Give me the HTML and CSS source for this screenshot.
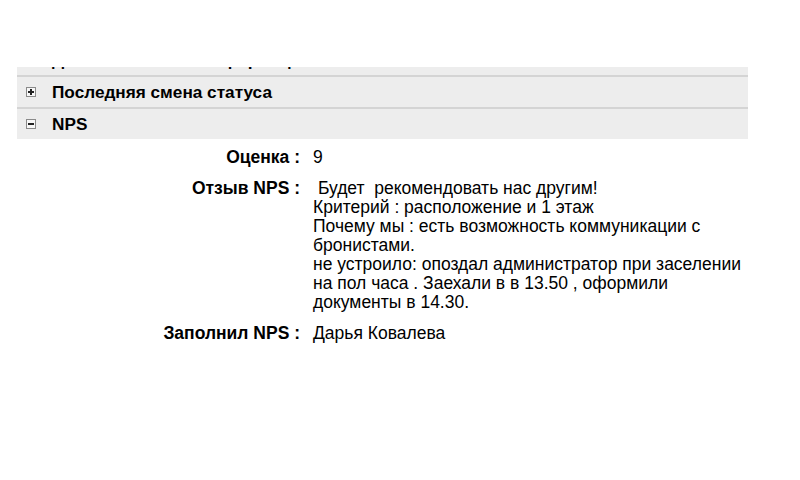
FILE: index.html
```html
<!DOCTYPE html>
<html lang="ru">
<head>
  <meta charset="UTF-8">
  <title>NPS</title>
  <link rel="stylesheet" href="styles.css">
</head>
<body>
  <div class="page">
    <div class="sections">
      <div class="section cut">
        <span class="toggle plus"></span>
        <span class="title">Дополнительная информация</span>
      </div>
      <div class="section">
        <span class="toggle plus"></span>
        <span class="title">Последняя смена статуса</span>
      </div>
      <div class="section">
        <span class="toggle minus"></span>
        <span class="title">NPS</span>
      </div>
    </div>

    <table class="details">
      <tr>
        <td class="label">Оценка :</td>
        <td class="value">9</td>
      </tr>
      <tr>
        <td class="label">Отзыв NPS :</td>
        <td class="value review"> Будет  рекомендовать нас другим!
Критерий : расположение и 1 этаж
Почему мы : есть возможность коммуникации с бронистами.
не устроило: опоздал администратор при заселении на пол часа . Заехали в в 13.50 , оформили документы в 14.30.</td>
      </tr>
      <tr>
        <td class="label">Заполнил NPS :</td>
        <td class="value">Дарья Ковалева</td>
      </tr>
    </table>
  </div>
</body>
</html>
```

FILE: styles.css
```css
body {
  margin: 0;
  font-family: "Liberation Sans", Arial, sans-serif;
  background: #fff;
  color: #000;
}
.page {
  padding-top: 67px;
  padding-left: 17px;
  width: 731px;
}
.sections {
  background: #ededed;
  overflow: hidden;
}
.section {
  display: flex;
  align-items: center;
  height: 30px;
  padding-left: 9px;
  border-top: 2px solid #d4d4d4;
}
.section.cut {
  margin-top: -22px;
  border-top: none;
}
.title {
  font-weight: bold;
  font-size: 17.2px;
  margin-left: 16px;
}
.toggle {
  position: relative;
  box-sizing: border-box;
  width: 10px;
  height: 10px;
  border: 1px solid #8a8a8a;
  background: #f7f7f7;
}
.toggle::before, .toggle::after {
  content: "";
  position: absolute;
  background: #222;
}
.toggle::before {
  left: 1px;
  top: 3px;
  width: 6px;
  height: 2px;
}
.plus::after {
  left: 3px;
  top: 1px;
  width: 2px;
  height: 6px;
}
.details {
  border-collapse: collapse;
  margin-left: -17px;
  margin-top: 3px;
  font-size: 17.5px;
  line-height: 19px;
}
.details td {
  vertical-align: top;
  padding: 6px 0;
}
.label {
  width: 300px;
  text-align: right;
  font-weight: bold;
}
.value {
  padding-left: 13px !important;
  width: 435px;
}
.review {
  white-space: pre-wrap;
}
```
